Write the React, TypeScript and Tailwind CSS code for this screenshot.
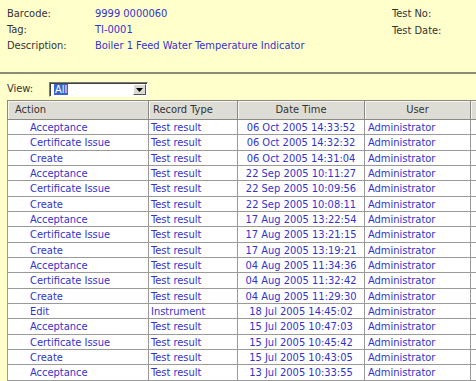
import React from "react";

type HistoryRow = {
    action: string;
    recordType: string;
    dateTime: string;
    user: string;
};

const rows: HistoryRow[] = [
    { action: "Acceptance", recordType: "Test result", dateTime: "06 Oct 2005 14:33:52", user: "Administrator" },
    { action: "Certificate Issue", recordType: "Test result", dateTime: "06 Oct 2005 14:32:32", user: "Administrator" },
    { action: "Create", recordType: "Test result", dateTime: "06 Oct 2005 14:31:04", user: "Administrator" },
    { action: "Acceptance", recordType: "Test result", dateTime: "22 Sep 2005 10:11:27", user: "Administrator" },
    { action: "Certificate Issue", recordType: "Test result", dateTime: "22 Sep 2005 10:09:56", user: "Administrator" },
    { action: "Create", recordType: "Test result", dateTime: "22 Sep 2005 10:08:11", user: "Administrator" },
    { action: "Acceptance", recordType: "Test result", dateTime: "17 Aug 2005 13:22:54", user: "Administrator" },
    { action: "Certificate Issue", recordType: "Test result", dateTime: "17 Aug 2005 13:21:15", user: "Administrator" },
    { action: "Create", recordType: "Test result", dateTime: "17 Aug 2005 13:19:21", user: "Administrator" },
    { action: "Acceptance", recordType: "Test result", dateTime: "04 Aug 2005 11:34:36", user: "Administrator" },
    { action: "Certificate Issue", recordType: "Test result", dateTime: "04 Aug 2005 11:32:42", user: "Administrator" },
    { action: "Create", recordType: "Test result", dateTime: "04 Aug 2005 11:29:30", user: "Administrator" },
    { action: "Edit", recordType: "Instrument", dateTime: "18 Jul 2005 14:45:02", user: "Administrator" },
    { action: "Acceptance", recordType: "Test result", dateTime: "15 Jul 2005 10:47:03", user: "Administrator" },
    { action: "Certificate Issue", recordType: "Test result", dateTime: "15 Jul 2005 10:45:42", user: "Administrator" },
    { action: "Create", recordType: "Test result", dateTime: "15 Jul 2005 10:43:05", user: "Administrator" },
    { action: "Acceptance", recordType: "Test result", dateTime: "13 Jul 2005 10:33:55", user: "Administrator" },
];

const cols = "grid grid-cols-[141px_89px_127px_106px_40px]";

function HeaderCell({ children, className = "" }: { children?: React.ReactNode; className?: string }) {
    return (
        <div className={`flex items-center border-r border-[#8a8a84] bg-[#deddd5] shadow-[inset_1px_1px_0_#f6f5f0] text-[#333] ${className}`}>
            {children}
        </div>
    );
}

export default function App() {
    return (
        <div
            className="w-[476px] h-[381px] overflow-hidden bg-[#ffffcc] text-[11px] text-[#333]"
            style={{ fontFamily: '"DejaVu Sans Condensed", "DejaVu Sans", sans-serif' }}
        >
            {/* item details */}
            <div className="flex h-[72px] items-start pt-[6px] leading-[16px]">
                <div className="grid flex-1 grid-cols-[88px_1fr] content-start pl-[7px]">
                    <span>Barcode:</span>
                    <span className="text-[#3333cc]">9999 0000060</span>
                    <span>Tag:</span>
                    <span className="text-[#3333cc]">TI-0001</span>
                    <span>Description:</span>
                    <span className="text-[#3333cc]">Boiler 1 Feed Water Temperature Indicator</span>
                </div>
                <div className="flex w-[84px] flex-col">
                    <span>Test No:</span>
                    <span className="mt-[1px]">Test Date:</span>
                </div>
            </div>
            <div className="h-[2px] bg-[#8b8b78]" />

            {/* view filter */}
            <div className="mt-[8px] flex h-[15px] items-center pl-[7px]">
                <span className="w-[42px]">View:</span>
                <div className="flex h-[15px] w-[99px] border-t border-l border-[#7a7a7a] border-b border-r border-b-white border-r-white bg-white shadow-[inset_1px_1px_0_#404040]">
                    <div className="flex flex-1 items-center pl-[4px]">
                        <span className="bg-[#3a64c8] px-[1px] leading-[11px] text-white">All</span>
                    </div>
                    <div className="my-[1px] mr-[1px] flex w-[13px] items-center justify-center border border-t-white border-l-white border-b-[#555] border-r-[#555] bg-[#dcdad2]">
                        <svg width="7" height="4" viewBox="0 0 7 4">
                            <path d="M0 0h7L3.5 4z" fill="#000" />
                        </svg>
                    </div>
                </div>
            </div>

            {/* history table */}
            <div className="mt-[3px] ml-[7px]">
                <div className={`${cols} h-[20px] border-t border-b border-l border-[#8a8a84]`}>
                    <HeaderCell className="pl-[7px]">Action</HeaderCell>
                    <HeaderCell className="pl-[4px]">Record Type</HeaderCell>
                    <HeaderCell className="justify-center">Date Time</HeaderCell>
                    <HeaderCell className="justify-center">User</HeaderCell>
                    <HeaderCell />
                </div>
                {rows.map((r, i) => (
                    <div key={i} className={`${cols} h-[15.33px] border-b border-l border-[#9a9a9a] bg-white text-[#3333cc]`}>
                        <div className="flex items-center border-r border-[#9a9a9a] pl-[22px]">{r.action}</div>
                        <div className="flex items-center border-r border-[#9a9a9a] pl-[2px]">{r.recordType}</div>
                        <div className="flex items-center justify-center border-r border-[#9a9a9a]">{r.dateTime}</div>
                        <div className="flex items-center border-r border-[#9a9a9a] pl-[3px]">{r.user}</div>
                        <div />
                    </div>
                ))}
            </div>
        </div>
    );
}
